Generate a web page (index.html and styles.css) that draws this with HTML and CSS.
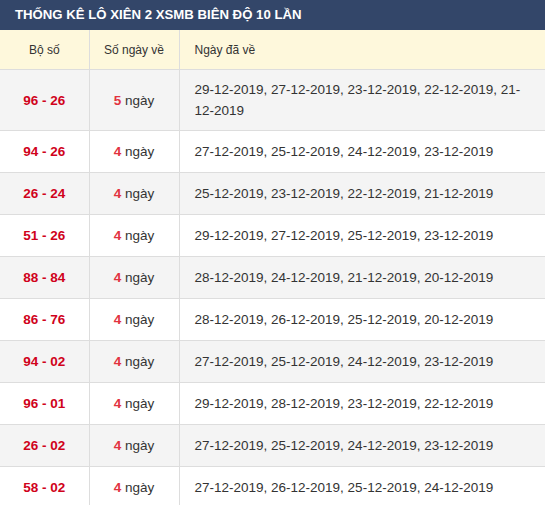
FILE: index.html
```html
<!DOCTYPE html>
<html lang="vi">
<head>
<meta charset="utf-8">
<title>Thống kê lô xiên 2 XSMB</title>
<link rel="stylesheet" href="styles.css">
</head>
<body>
<div class="panel">
  <h2 class="title">THỐNG KÊ LÔ XIÊN 2 XSMB BIÊN ĐỘ 10 LẦN</h2>
  <table class="stats">
    <colgroup><col class="c1"><col class="c2"><col class="c3"></colgroup>
    <thead>
      <tr><th>Bộ số</th><th>Số ngày về</th><th class="left">Ngày đã về</th></tr>
    </thead>
    <tbody>
      <tr class="first"><td class="pair">96 - 26</td><td class="count"><b>5</b> ngày</td><td class="dates">29-12-2019, 27-12-2019, 23-12-2019, 22-12-2019, 21-<wbr>12-2019</td></tr>
      <tr><td class="pair">94 - 26</td><td class="count"><b>4</b> ngày</td><td class="dates">27-12-2019, 25-12-2019, 24-12-2019, 23-12-2019</td></tr>
      <tr><td class="pair">26 - 24</td><td class="count"><b>4</b> ngày</td><td class="dates">25-12-2019, 23-12-2019, 22-12-2019, 21-12-2019</td></tr>
      <tr><td class="pair">51 - 26</td><td class="count"><b>4</b> ngày</td><td class="dates">29-12-2019, 27-12-2019, 25-12-2019, 23-12-2019</td></tr>
      <tr><td class="pair">88 - 84</td><td class="count"><b>4</b> ngày</td><td class="dates">28-12-2019, 24-12-2019, 21-12-2019, 20-12-2019</td></tr>
      <tr><td class="pair">86 - 76</td><td class="count"><b>4</b> ngày</td><td class="dates">28-12-2019, 26-12-2019, 25-12-2019, 20-12-2019</td></tr>
      <tr><td class="pair">94 - 02</td><td class="count"><b>4</b> ngày</td><td class="dates">27-12-2019, 25-12-2019, 24-12-2019, 23-12-2019</td></tr>
      <tr><td class="pair">96 - 01</td><td class="count"><b>4</b> ngày</td><td class="dates">29-12-2019, 28-12-2019, 23-12-2019, 22-12-2019</td></tr>
      <tr><td class="pair">26 - 02</td><td class="count"><b>4</b> ngày</td><td class="dates">27-12-2019, 25-12-2019, 24-12-2019, 23-12-2019</td></tr>
      <tr><td class="pair">58 - 02</td><td class="count"><b>4</b> ngày</td><td class="dates">27-12-2019, 26-12-2019, 25-12-2019, 24-12-2019</td></tr>
    </tbody>
  </table>
</div>
</body>
</html>
```

FILE: styles.css
```css
html, body {
  margin: 0;
  padding: 0;
  background: #ffffff;
}
body {
  font-family: "Liberation Sans", Arial, sans-serif;
  font-size: 13.5px;
  color: #333333;
}
.panel {
  width: 545px;
}
.title {
  margin: 0;
  height: 30px;
  line-height: 30px;
  padding: 0 0 0 15px;
  background: #334669;
  color: #ffffff;
  font-size: 13.2px;
  font-weight: bold;
}
.stats {
  width: 100%;
  border-collapse: collapse;
  table-layout: fixed;
}
.c1 { width: 89px; }
.c2 { width: 90px; }
.stats th {
  height: 39px;
  padding: 0;
  background: #fef8dc;
  font-weight: normal;
  font-size: 12px;
  color: #333333;
  text-align: center;
  border: 1px solid #dddddd;
  border-top: 0;
  line-height: 20px;
}
.stats th.left {
  text-align: left;
  padding-left: 15px;
}
.stats th:first-child,
.stats td:first-child { border-left: 0; }
.stats th:last-child,
.stats td:last-child { border-right: 0; }
.stats td {
  height: 41px;
  padding: 0;
  border: 1px solid #dddddd;
  line-height: 21px;
  text-align: center;
  vertical-align: middle;
}
.stats tbody tr:nth-child(odd) td { background: #f4f4f4; }
.stats tbody tr:nth-child(even) td { background: #ffffff; }
.stats tr.first td { height: 60px; }
.stats td.dates {
  text-align: left;
  padding: 0 20px 0 15px;
}
.pair {
  color: #d0021b;
  font-weight: bold;
}
.count b {
  color: #e2323f;
}
```
